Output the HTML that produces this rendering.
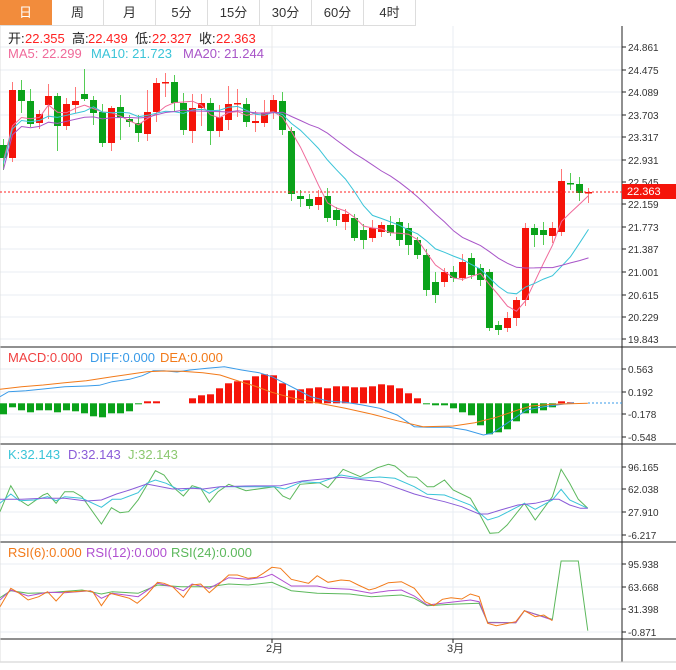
<!DOCTYPE html>
<html><head><meta charset="utf-8">
<style>
body{margin:0;width:676px;height:670px;background:#fff;overflow:hidden;font-family:"Liberation Sans","Noto Sans CJK SC",sans-serif}
.tabs{position:absolute;left:0;top:0;height:25px;display:flex;border-bottom:1px solid #ddd}
.tab{width:52px;height:25px;line-height:25px;text-align:center;font-size:13px;color:#333;border-right:1px solid #ddd;box-sizing:border-box}
.tab.on{background:#f28c3c;color:#fff;border-color:#f28c3c}
svg{position:absolute;left:0;top:0}
</style></head><body>
<div class="tabs"><div class="tab on">日</div><div class="tab">周</div><div class="tab">月</div><div class="tab">5分</div><div class="tab">15分</div><div class="tab">30分</div><div class="tab">60分</div><div class="tab">4时</div></div>
<svg id="s" width="676" height="670" style="top:0"></svg>
<script>
var S=document.getElementById('s'),H='';
function L(x1,y1,x2,y2,c,w,d){H+='<line x1="'+x1+'" y1="'+y1+'" x2="'+x2+'" y2="'+y2+'" stroke="'+c+'" stroke-width="'+(w||1)+'"'+(d?' stroke-dasharray="'+d+'"':'')+'/>';}
function R(x,y,w,h,c){H+='<rect x="'+x+'" y="'+y+'" width="'+w+'" height="'+h+'" fill="'+c+'"/>';}
function T(x,y,t,c,s){H+='<text x="'+x+'" y="'+y+'" fill="'+c+'" font-size="'+(s||12)+'">'+t+'</text>';}
function TS(x,y,parts,s){H+='<text x="'+x+'" y="'+y+'" font-size="'+(s||12)+'">';var cx=x;parts.forEach(function(p){H+='<tspan x="'+p[2]+'" fill="'+p[1]+'">'+p[0]+'</tspan>'});H+='</text>';}
function P(pts,c){H+='<polyline fill="none" stroke="'+c+'" stroke-width="1" points="'+pts.map(function(p){return p[0].toFixed(1)+','+p[1].toFixed(1)}).join(' ')+'"/>';}
function Z(a){var o=[];for(var i=0;i<a.length;i+=2)o.push([a[i]/2.317,340+a[i+1]/3]);return o;}
var G='#e8eef3';
[47,70,92,115,137,160,182,204,227,249,272,295,317,339].forEach(function(y){L(0,y,622,y,G)});
[369,392,414,437,467,489,512,535,564,587,609,632].forEach(function(y){L(0,y,622,y,G)});
L(272,26,272,640,G);L(453,26,453,640,G);
[347,444,542,639].forEach(function(y){L(0,y,676,y,'#222')});
L(622,26,622,662,'#222');L(0,662,676,662,'#ccc');
L(0,26,0,662,'#ddd');
var ml=[['24.861',47],['24.475',70],['24.089',92],['23.703',115],['23.317',137],['22.931',160],['22.545',182],['22.159',204],['21.773',227],['21.387',249],['21.001',272],['20.615',295],['20.229',317],['19.843',339],
['0.563',369],['0.192',392],['-0.178',414],['-0.548',437],['96.165',467],['62.038',489],['27.910',512],['-6.217',535],['95.938',564],['63.668',587],['31.398',609],['-0.871',632]];
ml.forEach(function(a){L(622,a[1],626,a[1],'#222');T(628,a[1]+4,a[0],'#333',10)});
var c=[['g',145,158],['r',90,158],['g',90,101],['g',101,124],['r',114,123],['r',96,105],['g',96,126],['r',104,126],['r',101,105],['g',94,99],['g',100,113],['g',112,143],['r',108,143],['g',107,118],['g',119,122],['g',123,133],['r',112,134],['r',83,112],['r',82,83],['g',82,103],['g',103,130],['r',108,131],['r',103,108],['g',103,131],['r',117,131],['r',104,120],['r',103,104],['g',104,122],['r',121,123],['r',113,123],['r',100,113],['g',101,130],['g',131,194],['g',196,199],['g',199,206],['r',197,205],
['g',196,218],['g',210,220],['r',214,222],['g',218,238],['g',230,240],['r',228,238],['r',225,232],['g',225,233],['g',222,240],['g',228,245],['g',240,255],['g',255,290],['g',282,295],['r',272,282],['g',272,278],['r',262,278],['g',258,275],['g',268,280],['g',272,328],['g',325,330],['r',318,328],['r',300,318],['r',228,300],['g',228,235],['g',230,235],['r',228,236],['r',181,232],['g',183,184],['g',184,193],['r',192,193]];
var wk=[6,8,10,12,4,12,3,6,14,25,4,8,2,12,4,8,22,5,9,7,10,14,9,5,12,18,14,6,10,13,5,9,4,6,5,7,8,3,5,4,6,8,3,9,4,5,3,6,10,4,6,8,5,4,3,4,6,3,5,4,8,6,12,10,7,4];
var closes=[];
c.forEach(function(d,i){var x=3.5+9*i,col=d[0]=='r'?'#f5140a':'#0aa21a',wc=d[0]=='r'?'#f77':'#5c5';
L(x,d[1]-wk[i],x,d[2]+wk[(i+3)%66],wc);R(x-3.5,d[1],7,Math.max(1.5,d[2]-d[1]),col);closes.push(d[0]=='r'?d[1]:d[2]);});
function ma(n,col){var p=[];for(var i=0;i<closes.length;i++){var s=0,k=0;for(var j=Math.max(0,i-n+1);j<=i;j++){s+=closes[j];k++}p.push([3.5+9*i,s/k+(i<n?(n-k)*0.6:0)])}P(p,col)}
ma(5,'#f06a9a');ma(10,'#3ac4d8');ma(20,'#a855c8');
L(0,192,622,192,'#f22',1,'2,2');
R(622,184,54,15,'#f5140a');T(627,195,'22.363','#fff',11);
TS(8,43,[['开:','#222',8],['22.355','#f22',25],['高:','#222',72],['22.439','#f22',88],['低:','#222',135],['22.327','#f22',152],['收:','#222',199],['22.363','#f22',216]],13);
TS(8,58,[['MA5: 22.299','#f06a9a',8],['MA10: 21.723','#3ac4d8',91],['MA20: 21.244','#a855c8',183]],13);
L(272,26,272,65,'#e8e8e8');
var mb=[-11,-4,-7,-9,-7,-7,-9,-7,-8,-10,-13,-14,-10,-10,-8,-1,2,2,0,0,0,5,8,9,15,20,22,23,27,29,28,20,13,14,15,16,15,17,17,16,16,17,19,18,15,10,5,-1,-2,-2,-5,-9,-12,-22,-31,-29,-26,-18,-10,-10,-7,-4,2,1];
var z0=403.3;
mb.forEach(function(h,i){var x=3.5+9*i-3.5;if(h>0)R(x,z0-h,7,h,'#f5140a');else if(h<0)R(x,z0,7,-h,'#0aa21a');});
P(Z([0,170,20,155,60,152,100,147,150,140,200,138,230,136,260,125,300,118,330,107,355,92,380,92,410,96,440,90,480,85,520,80,560,90,600,98,630,110,660,130,690,150,720,170,760,183,800,187,840,195,880,205,920,225,960,260,990,262,1040,262,1080,270,1120,285,1140,280,1180,245,1220,210,1260,200,1290,195,1330,188]),'#3a9be8');
P(Z([0,148,50,140,100,135,150,128,200,122,260,110,300,103,340,95,380,93,420,94,470,98,510,105,545,120,590,138,630,157,680,175,740,190,800,205,860,222,920,242,980,260,1050,258,1100,248,1150,232,1200,210,1230,198,1280,193,1362,190]),'#f27a1a');
L(588,403,622,403,'#3a9be8',1,'2,2');
TS(8,362,[['MACD:0.000','#f04040',8],['DIFF:0.000','#3a9be8',90],['DEA:0.000','#f27a1a',160]],13);
P(Z([0,515,25,437,45,480,65,497,100,465,110,460,130,490,150,455,170,455,190,470,235,552,258,503,278,518,298,515,320,480,360,392,380,405,400,440,425,468,445,437,465,445,485,487,505,455,530,433,570,452,635,440,655,468,672,478,695,433,740,428,760,443,795,388,835,410,875,383,900,373,915,378,945,410,965,412,990,440,1005,440,1030,420,1050,450,1090,475,1110,520,1135,580,1155,578,1175,555,1215,490,1240,540,1280,470,1300,388,1320,430,1340,478,1362,505]),'#5cb85c');
P(Z([0,490,25,462,45,482,80,480,110,470,130,482,150,470,190,475,235,502,260,478,280,478,320,458,340,430,360,420,385,430,420,453,445,443,465,445,485,460,510,440,570,440,635,440,660,447,700,425,740,428,790,405,835,415,880,411,915,415,960,440,990,463,1030,465,1050,475,1090,495,1130,540,1155,530,1215,490,1240,508,1280,480,1300,448,1320,480,1362,505]),'#3ac4d8');
P(Z([0,478,50,478,100,475,150,475,200,483,235,480,270,462,300,450,340,432,400,447,445,445,470,447,510,440,570,438,650,437,700,423,790,412,880,425,960,462,1000,476,1030,485,1070,500,1110,522,1130,522,1160,510,1200,495,1240,490,1280,478,1295,478,1320,495,1345,505,1362,505]),'#8a5cd8');
TS(8,459,[['K:32.143','#3ac4d8',8],['D:32.143','#8a5cd8',68],['J:32.143','#8cc870',128]],13);
P(Z([0,773,25,752,65,760,110,758,190,750,235,762,260,755,320,760,365,735,420,740,485,740,530,732,575,735,630,727,675,752,735,760,810,762,860,770,930,765,960,775,990,797,1045,793,1110,790,1130,847,1195,848,1215,812,1280,838,1300,663,1340,663,1362,872]),'#5cb85c');
P(Z([0,780,25,750,65,768,110,757,150,758,210,752,235,775,260,760,320,770,365,730,400,740,425,752,445,732,485,745,530,713,575,718,610,712,630,703,675,738,735,738,760,745,810,748,860,760,900,752,930,750,960,768,990,795,1045,787,1090,780,1110,785,1130,848,1195,848,1215,812,1280,840]),'#b050d0');
P(Z([0,800,25,745,45,760,65,780,90,770,110,755,130,783,150,755,170,755,200,752,215,755,235,797,255,760,280,768,300,775,318,790,340,765,365,727,380,730,400,740,425,772,445,735,465,732,485,758,505,735,530,705,550,705,575,715,595,712,610,700,630,682,650,685,675,718,715,730,735,707,760,727,790,720,810,722,830,735,855,750,870,745,900,728,930,725,960,745,985,785,1005,797,1025,778,1045,773,1070,777,1090,762,1110,770,1130,850,1150,857,1195,845,1215,812,1240,830,1260,825,1280,842]),'#f27a1a');
TS(8,557,[['RSI(6):0.000','#f27a1a',8],['RSI(12):0.000','#b050d0',86],['RSI(24):0.000','#5cb85c',171]],13);
L(272,639,272,643,'#222');L(453,639,453,643,'#222');
T(266,652,'2月','#333',11);T(447,652,'3月','#333',11);
S.innerHTML=H;
</script>
</body></html>
